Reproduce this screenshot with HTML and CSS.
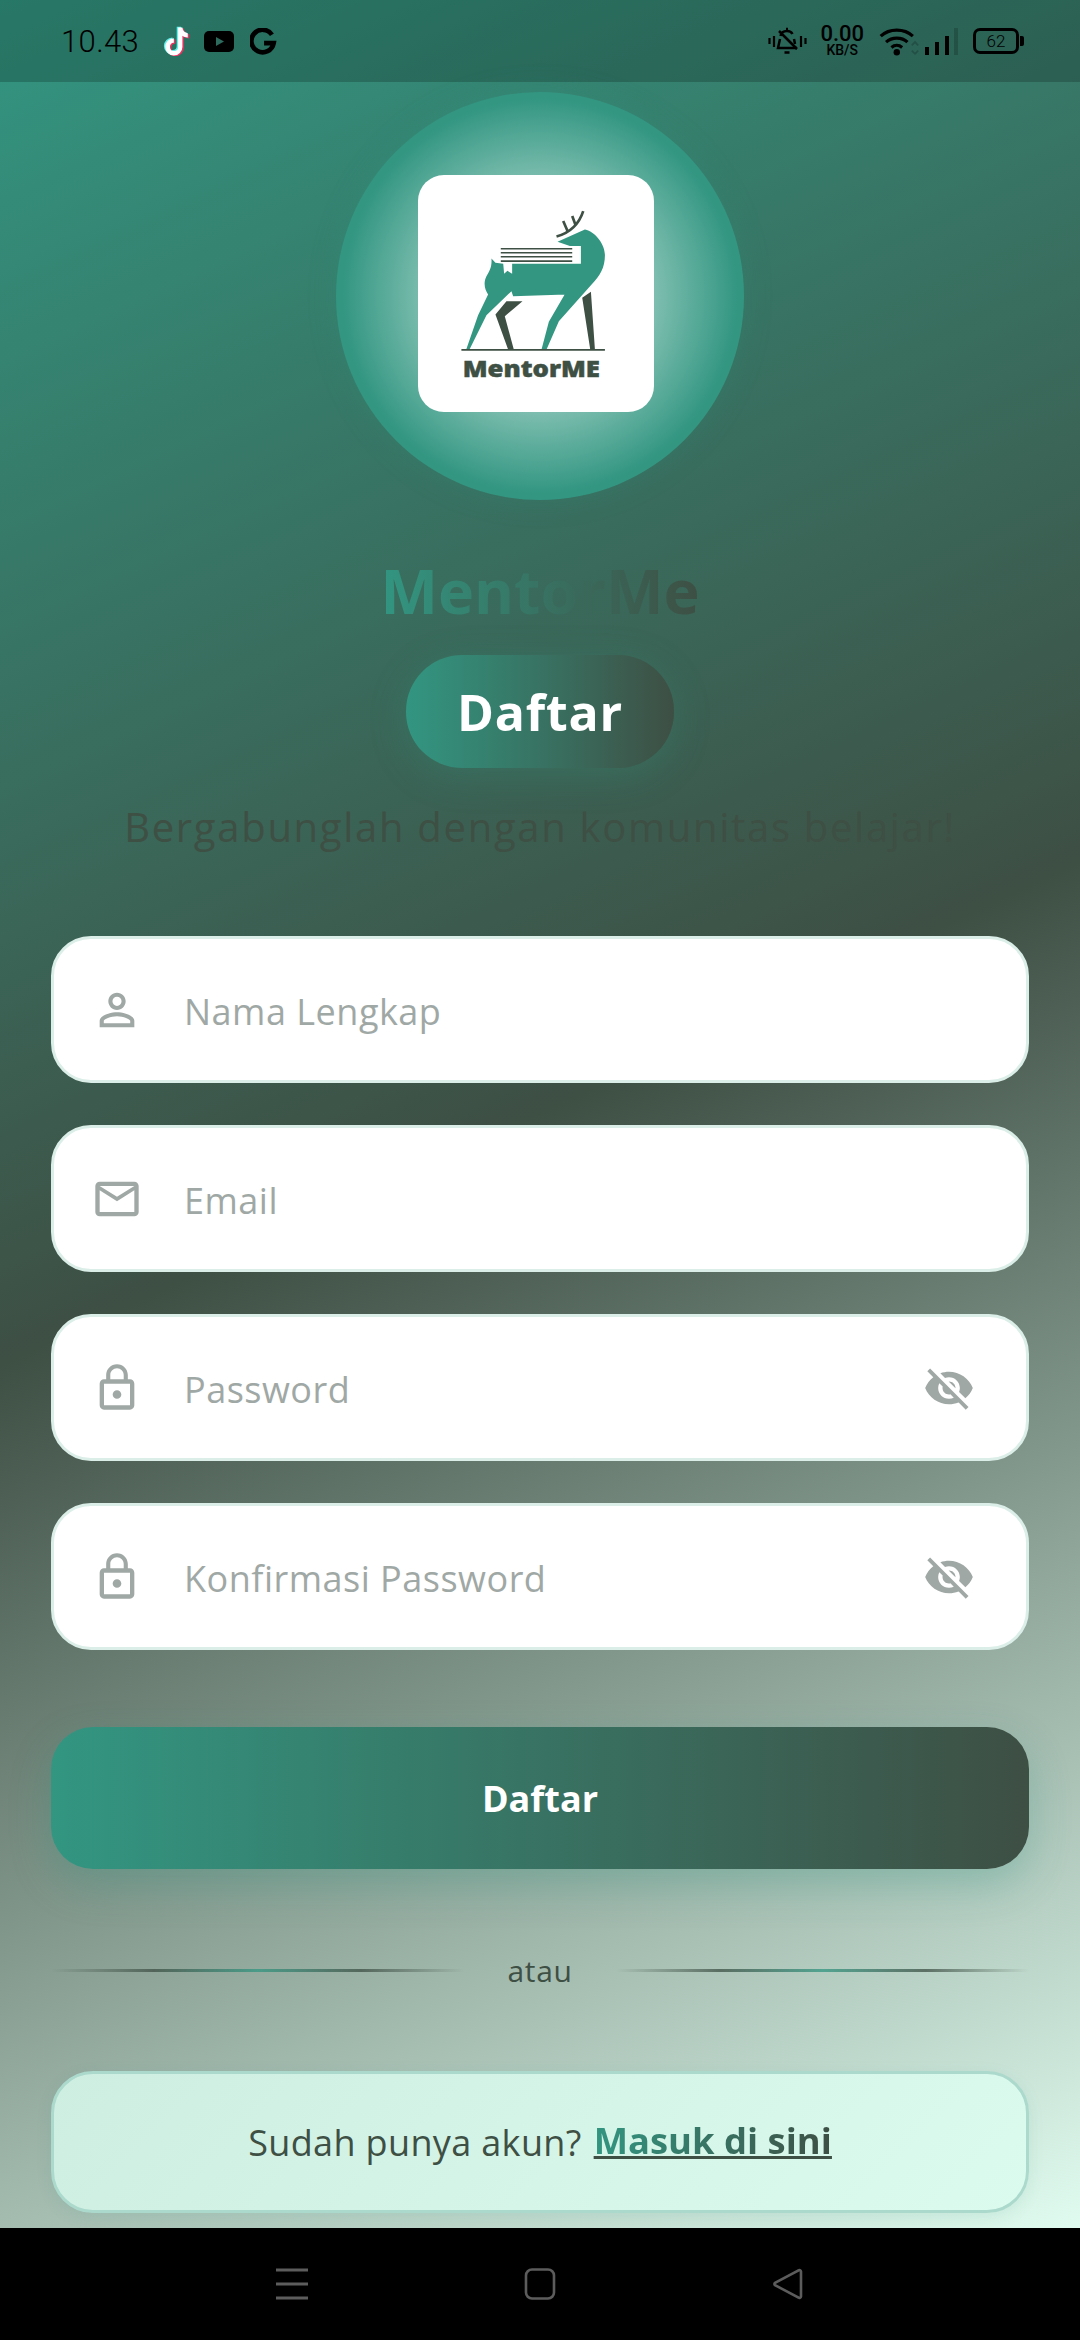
FILE: index.html
```html
<!DOCTYPE html>
<html lang="en">
<head>
  <meta charset="UTF-8" />
  <title>MentorMe - Daftar</title>
  <meta name="viewport" content="width=device-width, initial-scale=1" />
  <link rel="stylesheet" href="styles.css">
</head>
<body>
  <div class="screen">
    <div class="app">
      <!-- Status bar -->
      <div class="status-bar">
        <div class="status-group">
          <span class="time">10.43</span>
          <svg class="ic-tiktok" viewBox="3.500 1.500 24 28">
            <path class="tt-cyan" d="M17 3h4c.3 3 2.200 5 5 5.300v4c-2 0-3.700-.6-5-1.600V21a8 8 0 1 1-8-8v4.200a3.800 3.800 0 1 0 4 3.800z" transform="translate(-1.300 -.8)" />
            <path class="tt-red" d="M17 3h4c.3 3 2.200 5 5 5.300v4c-2 0-3.700-.6-5-1.600V21a8 8 0 1 1-8-8v4.200a3.800 3.800 0 1 0 4 3.800z" transform="translate(1.300 .8)" />
            <path class="tt-white" d="M17 3h4c.3 3 2.200 5 5 5.300v4c-2 0-3.700-.6-5-1.600V21a8 8 0 1 1-8-8v4.200a3.800 3.800 0 1 0 4 3.800z" />
          </svg>
          <svg class="ic-youtube" viewBox="0 0 30 21">
            <rect width="30" height="21" rx="5" fill="#000" />
            <path d="M12 6l8 4.500-8 4.500z" fill="#2c6b5d" />
          </svg>
          <svg class="ic-google" viewBox="0 0 24 24">
            <path d="M19.500 6A10 10 0 1 0 21 13.500H12.500" fill="none" stroke="#000" stroke-width="4.200" />
          </svg>
        </div>
        <div class="status-group status-right">
          <svg class="ic-bell" viewBox="0 0 39 28">
            <path d="M1.500 11v6M6 9v11M33 9v11M37.500 11v6" stroke="#000" stroke-width="2.200" fill="none" />
            <path d="M12.500 9C13 6 15.500 4 19 4c2.500 0 4.500 1 5.500 3M12 12l-2 9H29M26 12l1 5" stroke="#000" stroke-width="2.500" fill="none" />
            <path d="M11 4l18 18" stroke="#000" stroke-width="2.500" />
            <path d="M16.500 25.500h5M18 2h2" stroke="#000" stroke-width="2.400" />
          </svg>
          <div class="speed">
            <span class="speed-num">0.00</span>
            <span class="speed-unit">KB/S</span>
          </div>
          <svg class="ic-wifi" viewBox="0 0 40 28">
            <path d="M2 9.500c8-7.500 22-7.500 30 0M7 15c5.500-5 14.500-5 20 0M12 20c3-2.500 7-2.500 10 0" fill="none" stroke="#000" stroke-width="3" />
            <circle cx="17" cy="24.500" r="3" fill="#000" />
            <path d="M31 18l3-3 3 3M31 23l3 3 3-3" fill="none" stroke="#244f46" stroke-width="1.600" />
          </svg>
          <svg class="ic-signal" viewBox="0 0 34 27">
            <rect x="0" y="19" width="4" height="8" fill="#000" />
            <rect x="10" y="14" width="4" height="13" fill="#000" />
            <rect x="20" y="8" width="4" height="19" fill="#000" />
            <rect x="29" y="0" width="4" height="27" fill="#000" opacity=".18" />
          </svg>
          <div class="battery">
            <span class="battery-body">62</span>
            <span class="battery-cap"></span>
          </div>
        </div>
      </div>

      <main class="content">
        <div class="logo-ring">
          <div class="logo-card">
            <svg class="logo" viewBox="290 282 707 710">
              <path class="deer" d="M708 482 L790 445 C822 452 850 490 850 522 C850 560 835 585 810 610 L712 720 L675 805 L660 805 L682 722 L735 630 L733 640 L575 645 L570 630 L495 702 L445 803 L435 803 L470 702 L500 640 C490 625 485 605 495 585 C505 570 512 555 510 532 L522 545 L545 548 L778 548 L778 495 L745 495 Z" />
              <path class="logo-book" d="M545 545H572V578L558 569L548 578Z" />
              <path class="logo-lines" d="M538 503H752M538 515H752M538 527H752M538 540H752" />
              <path class="logo-dark" d="M522 700L555 660H603L550 705L577 805H560ZM782 650L808 632L820 805H806Z" />
              <path class="logo-antler" d="M705 466C745 455 772 430 785 390M725 420L738 450M752 405L762 432" />
              <path class="logo-ground" d="M420 806H850" />
              <text class="logo-text" x="424" y="888" textLength="411" lengthAdjust="spacingAndGlyphs">MentorME</text>
            </svg>
          </div>
        </div>

        <h1 class="brand">MentorMe</h1>
        <div class="pill">Daftar</div>
        <p class="subtitle">Bergabunglah dengan komunitas belajar!</p>

        <form class="form">
          <div class="field">
            <svg class="field-icon" viewBox="0 0 24 24"><path d="M12 5.900a2.100 2.100 0 1 1 0 4.200 2.100 2.100 0 0 1 0-4.200m0 9c2.970 0 6.100 1.460 6.100 2.100v1.100H5.900V17c0-.64 3.130-2.100 6.100-2.100M12 4C9.790 4 8 5.790 8 8s1.790 4 4 4 4-1.790 4-4-1.790-4-4-4zm0 9c-2.670 0-8 1.340-8 4v3h16v-3c0-2.660-5.330-4-8-4z" /></svg>
            <input type="text" placeholder="Nama Lengkap" />
          </div>
          <div class="field">
            <svg class="field-icon" viewBox="0 0 24 24"><path d="M20 4H4c-1.100 0-2 .9-2 2v12c0 1.100.9 2 2 2h16c1.100 0 2-.9 2-2V6c0-1.100-.9-2-2-2zm0 14H4V8l8 5 8-5v10zm-8-7L4 6h16l-8 5z" /></svg>
            <input type="email" placeholder="Email" />
          </div>
          <div class="field">
            <svg class="field-icon" viewBox="0 0 24 24"><path d="M12 17c1.100 0 2-.9 2-2s-.9-2-2-2-2 .9-2 2 .9 2 2 2zm6-9h-1V6c0-2.760-2.240-5-5-5S7 3.240 7 6v2H6c-1.100 0-2 .9-2 2v10c0 1.100.9 2 2 2h12c1.100 0 2-.9 2-2V10c0-1.100-.9-2-2-2zM8.900 6c0-1.710 1.390-3.100 3.100-3.100s3.100 1.390 3.100 3.100v2H8.900V6zM18 20H6V10h12v10z" /></svg>
            <input type="password" placeholder="Password" />
            <svg class="field-icon eye" viewBox="0 0 24 24"><path d="M12 7c2.760 0 5 2.240 5 5 0 .65-.13 1.260-.36 1.830l2.920 2.920c1.510-1.260 2.700-2.890 3.430-4.750-1.730-4.390-6-7.500-11-7.500-1.400 0-2.740.25-3.980.7l2.160 2.160C10.740 7.130 11.350 7 12 7zM2 4.270l2.280 2.280.46.46C3.080 8.300 1.780 10.020 1 12c1.730 4.390 6 7.500 11 7.500 1.550 0 3.030-.3 4.380-.84l.42.42L19.730 22 21 20.730 3.270 3 2 4.270zM7.530 9.800l1.550 1.550c-.05.21-.08.43-.08.65 0 1.660 1.340 3 3 3 .22 0 .44-.03.65-.08l1.550 1.550c-.67.33-1.410.53-2.200.53-2.760 0-5-2.240-5-5 0-.79.2-1.530.53-2.200zm4.310-.78l3.150 3.150.02-.16c0-1.660-1.340-3-3-3l-.17.01z" /></svg>
          </div>
          <div class="field">
            <svg class="field-icon" viewBox="0 0 24 24"><path d="M12 17c1.100 0 2-.9 2-2s-.9-2-2-2-2 .9-2 2 .9 2 2 2zm6-9h-1V6c0-2.760-2.240-5-5-5S7 3.240 7 6v2H6c-1.100 0-2 .9-2 2v10c0 1.100.9 2 2 2h12c1.100 0 2-.9 2-2V10c0-1.100-.9-2-2-2zM8.900 6c0-1.710 1.390-3.100 3.100-3.100s3.100 1.390 3.100 3.100v2H8.900V6zM18 20H6V10h12v10z" /></svg>
            <input type="password" placeholder="Konfirmasi Password" />
            <svg class="field-icon eye" viewBox="0 0 24 24"><path d="M12 7c2.760 0 5 2.240 5 5 0 .65-.13 1.260-.36 1.830l2.920 2.920c1.510-1.260 2.700-2.890 3.430-4.750-1.730-4.390-6-7.500-11-7.500-1.400 0-2.740.25-3.980.7l2.160 2.160C10.740 7.130 11.350 7 12 7zM2 4.270l2.280 2.280.46.46C3.080 8.300 1.780 10.020 1 12c1.730 4.390 6 7.500 11 7.500 1.550 0 3.030-.3 4.380-.84l.42.42L19.730 22 21 20.730 3.270 3 2 4.270zM7.530 9.800l1.550 1.550c-.05.21-.08.43-.08.65 0 1.660 1.340 3 3 3 .22 0 .44-.03.65-.08l1.550 1.550c-.67.33-1.410.53-2.200.53-2.760 0-5-2.240-5-5 0-.79.2-1.530.53-2.200zm4.310-.78l3.150 3.150.02-.16c0-1.660-1.340-3-3-3l-.17.01z" /></svg>
          </div>
        </form>

        <div class="submit-button">Daftar</div>

        <div class="divider">
          <span class="divider-line"></span>
          <span class="divider-text">atau</span>
          <span class="divider-line"></span>
        </div>

        <div class="login-card">
          <span class="login-text">Sudah punya akun?</span>
          <a href="#" class="login-link">Masuk di sini</a>
        </div>
      </main>
    </div>

    <!-- Navigation bar -->
    <nav class="nav-bar">
      <svg class="nav-icon" viewBox="0 0 32 32"><path d="M0 2H32M0 16H32M0 30H32" fill="none" stroke="#5c5c5c" stroke-width="3" /></svg>
      <svg class="nav-icon" viewBox="0 0 32 32"><rect x="2" y="1.500" width="28" height="29" rx="6" fill="none" stroke="#5c5c5c" stroke-width="2.600" /></svg>
      <svg class="nav-icon" viewBox="0 0 32 32"><path d="M29 3.500V28.500a1.500 1.500 0 0 1-2.500 1L3 17.200a1.500 1.500 0 0 1 0-2.400L26.500 2.500a1.500 1.500 0 0 1 2.500 1z" fill="none" stroke="#5c5c5c" stroke-width="2.600" /></svg>
    </nav>
  </div>
</body>
</html>
```

FILE: styles.css
```css
:root {
  --teal: #329681;
  --dark: #3e4f44;
  --mint: #e0fbef;
  --hint: #a0a8a5;
}

* { box-sizing: border-box; }

body {
  margin: 0;
  font-family: "Open Sans", sans-serif;
  background-color: #000;
}

.screen {
  width: 1080px;
  height: 2340px;
  display: flex;
  flex-direction: column;
  overflow: hidden;
}

.app {
  flex: 1;
  display: flex;
  flex-direction: column;
  background: linear-gradient(155deg, var(--teal) 0%, var(--dark) 50%, var(--mint) 100%);
}

/* Status bar */
.status-bar {
  height: 82px;
  padding: 0 56px 0 61px;
  display: flex;
  justify-content: space-between;
  align-items: center;
  background-color: rgba(0, 0, 0, 0.2);
}

.status-group {
  display: flex;
  align-items: center;
}

.time {
  font-family: Roboto, sans-serif;
  font-weight: 300;
  font-size: 31px;
  letter-spacing: 0.4px;
  color: #000;
  margin-right: 24px;
}

.ic-tiktok { width: 27px; height: 30px; margin-right: 14px; }
.ic-youtube { width: 30px; height: 21px; margin-right: 16px; }
.ic-google { width: 27px; height: 27px; }

.tt-cyan { fill: #5ff0ea; }
.tt-red { fill: #f0305f; }
.tt-white { fill: #fff; }

.ic-bell { width: 39px; height: 28px; margin-right: 13px; }

.speed {
  display: flex;
  flex-direction: column;
  align-items: center;
  color: #000;
  font-family: Roboto, sans-serif;
  line-height: 1;
  margin-right: 14px;
}

.speed-num { font-size: 22px; font-weight: 500; line-height: 18px; }
.speed-unit { font-size: 14px; font-weight: 500; line-height: 14px; }

.ic-wifi { width: 44px; height: 30px; margin-right: 3px; }
.ic-signal { width: 34px; height: 27px; margin-right: 14px; }

.battery {
  display: flex;
  align-items: center;
}

.battery-body {
  width: 46px;
  height: 26px;
  border: 3px solid #000;
  border-radius: 7px;
  font-family: Roboto, sans-serif;
  font-size: 17px;
  font-weight: 300;
  line-height: 20px;
  text-align: center;
  color: #000;
}

.battery-cap {
  width: 4px;
  height: 10px;
  margin-left: 1px;
  background-color: #000;
  border-radius: 0 2px 2px 0;
}

/* Content */
.content {
  flex: 1;
  padding: 10px 51px 0;
  display: flex;
  flex-direction: column;
}

.logo-ring {
  width: 408px;
  height: 408px;
  align-self: center;
  display: flex;
  align-items: center;
  justify-content: center;
  border-radius: 50%;
  background: radial-gradient(circle closest-side, #e6f5f0 0%, var(--teal) 97%);
  box-shadow: 0 0 30px rgba(50, 150, 129, 0.2);
}

.logo-card {
  width: 236px;
  height: 237px;
  margin: 0 8px 6px 0;
  background-color: #fff;
  border-radius: 26px;
}

.logo {
  display: block;
  width: 100%;
  height: 100%;
}

.deer { fill: var(--teal); }
.logo-book { fill: #fff; }
.logo-dark { fill: var(--dark); }
.logo-lines { stroke: var(--dark); stroke-width: 5px; fill: none; }
.logo-antler { stroke: var(--dark); stroke-width: 8px; fill: none; }
.logo-ground { stroke: var(--dark); stroke-width: 5px; fill: none; }

.logo-text {
  font-family: "Open Sans", sans-serif;
  font-weight: 800;
  font-size: 70px;
  fill: var(--dark);
  stroke: var(--dark);
  stroke-width: 1.5px;
}

.brand {
  margin: 55px 0 0;
  align-self: center;
  font-size: 61px;
  line-height: 72px;
  font-weight: 700;
  color: transparent;
  background: linear-gradient(90deg, var(--teal), var(--dark));
  -webkit-background-clip: text;
  background-clip: text;
}

.pill {
  margin-top: 28px;
  align-self: center;
  width: 268px;
  height: 113px;
  display: flex;
  align-items: center;
  justify-content: center;
  border-radius: 56px;
  font-size: 50px;
  font-weight: 700;
  letter-spacing: 0.8px;
  color: #fff;
  background: linear-gradient(90deg, var(--teal), var(--dark));
  box-shadow: 0 8px 36px rgba(50, 150, 129, 0.25);
}

.subtitle {
  margin: 32px 0 0;
  font-size: 40px;
  line-height: 54px;
  letter-spacing: 1.7px;
  text-align: center;
  color: var(--dark);
}

/* Form */
.form {
  margin-top: 82px;
  display: flex;
  flex-direction: column;
  gap: 42px;
}

.field {
  height: 147px;
  padding: 0 51px 0 37px;
  display: flex;
  align-items: center;
  background-color: #fff;
  border: 3px solid #dceee8;
  border-radius: 40px;
}

.field input {
  flex: 1;
  min-width: 0;
  margin-left: 41px;
  padding: 3px 0 0;
  border: none;
  outline: none;
  background: none;
  font-family: inherit;
  font-size: 36px;
  letter-spacing: 0.5px;
}

.field input::placeholder {
  color: var(--hint);
  opacity: 1;
}

.field-icon {
  width: 52px;
  height: 52px;
  flex-shrink: 0;
  fill: var(--hint);
}

.submit-button {
  margin-top: 77px;
  height: 142px;
  display: flex;
  align-items: center;
  justify-content: center;
  border-radius: 42px;
  font-size: 36px;
  font-weight: 700;
  color: #fff;
  background: linear-gradient(90deg, var(--teal), var(--dark));
  box-shadow: 0 16px 40px rgba(50, 150, 129, 0.3);
}

.divider {
  margin-top: 79px;
  height: 44px;
  display: flex;
  align-items: center;
  gap: 44px;
}

.divider-line {
  flex: 1;
  height: 3px;
  opacity: 0.75;
  background: linear-gradient(90deg, transparent, var(--dark) 25%, var(--teal) 50%, var(--dark) 75%, transparent);
}

.divider-text {
  font-size: 30px;
  letter-spacing: 0.6px;
  color: var(--dark);
}

.login-card {
  margin-top: 79px;
  height: 142px;
  display: flex;
  align-items: center;
  justify-content: center;
  gap: 12px;
  border: 3px solid #abd9cc;
  border-radius: 42px;
  background: linear-gradient(135deg, #cfeee2, #dcfbef);
  box-shadow: 0 4px 16px rgba(50, 150, 129, 0.1);
}

.login-text {
  font-size: 36px;
  letter-spacing: 0.35px;
  color: var(--dark);
}

.login-link {
  margin-bottom: 4px;
  font-size: 36.4px;
  font-weight: 700;
  color: transparent;
  background: linear-gradient(90deg, var(--teal), var(--dark));
  -webkit-background-clip: text;
  background-clip: text;
  text-decoration: underline;
  text-decoration-color: var(--dark);
}

/* Navigation bar */
.nav-bar {
  height: 112px;
  flex-shrink: 0;
  display: flex;
  justify-content: center;
  align-items: center;
  gap: 216px;
  background-color: #000;
}

.nav-icon {
  width: 32px;
  height: 32px;
}
```
